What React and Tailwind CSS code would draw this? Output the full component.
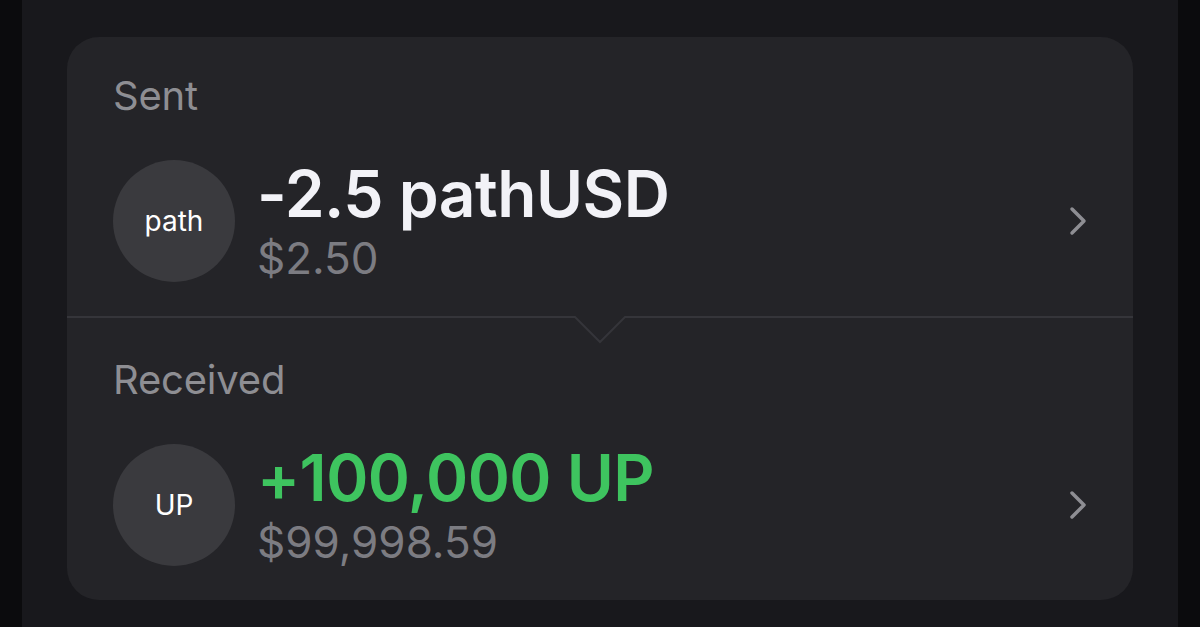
import React from "react";

const Chevron = () => (
  <svg width="22" height="32" viewBox="0 0 22 32" fill="none">
    <path d="M5 4 L17 16 L5 28" stroke="#8e8e93" strokeWidth="3.5" strokeLinecap="round" strokeLinejoin="round" />
  </svg>
);

const TransferRow = ({ label, symbol, amount, value, positive, lower }) => (
  <div className={`pl-[46px] pr-[44px] ${lower ? "pt-[43px]" : "pt-[39px]"}`}>
    <div className="text-[40px] leading-none text-[#8e8e93] tracking-[-0.2px]">{label}</div>
    <div className="flex items-center mt-[40px]">
      <div className="w-[122px] h-[122px] shrink-0 rounded-full bg-[#3a3a3e] flex items-center justify-center text-white text-[28px]">
        {symbol}
      </div>
      <div className="flex-1 ml-[22px] pt-[6px] -mb-[3px]">
        <div className={`text-[64px] leading-[64px] font-semibold tracking-[-0.5px] ${positive ? "text-[#3ec45f]" : "text-[#f2f2f7]"}`}>
          {amount}
        </div>
        <div className="text-[44px] leading-[60px] mt-[2px] text-[#7c7c82]">{value}</div>
      </div>
      <Chevron />
    </div>
  </div>
);

export default function App() {
  return (
    <div className="flex h-[627px] w-[1200px] bg-[#0b0b0d]" style={{ fontFamily: "Inter, 'Liberation Sans', sans-serif" }}>
      <div className="w-[22px]" />
      <div className="flex-1 bg-[#18181c] px-[45px] pt-[37px]">
        <div className="rounded-[32px] bg-[#242428] h-[563px] flex flex-col">
          <div className="h-[280px]">
            <TransferRow label="Sent" symbol="path" amount="-2.5 pathUSD" value="$2.50" />
          </div>
          <div className="relative h-0">
            <svg className="absolute left-0 top-[-1px]" width="1066" height="30" viewBox="0 0 1066 30">
              <path d="M0 1 H508 L533 26 L558 1 H1066" stroke="#35353a" strokeWidth="2" fill="none" />
            </svg>
          </div>
          <div className="flex-1">
            <TransferRow label="Received" symbol="UP" amount="+100,000 UP" value="$99,998.59" positive lower />
          </div>
        </div>
      </div>
      <div className="w-[22px]" />
    </div>
  );
}
